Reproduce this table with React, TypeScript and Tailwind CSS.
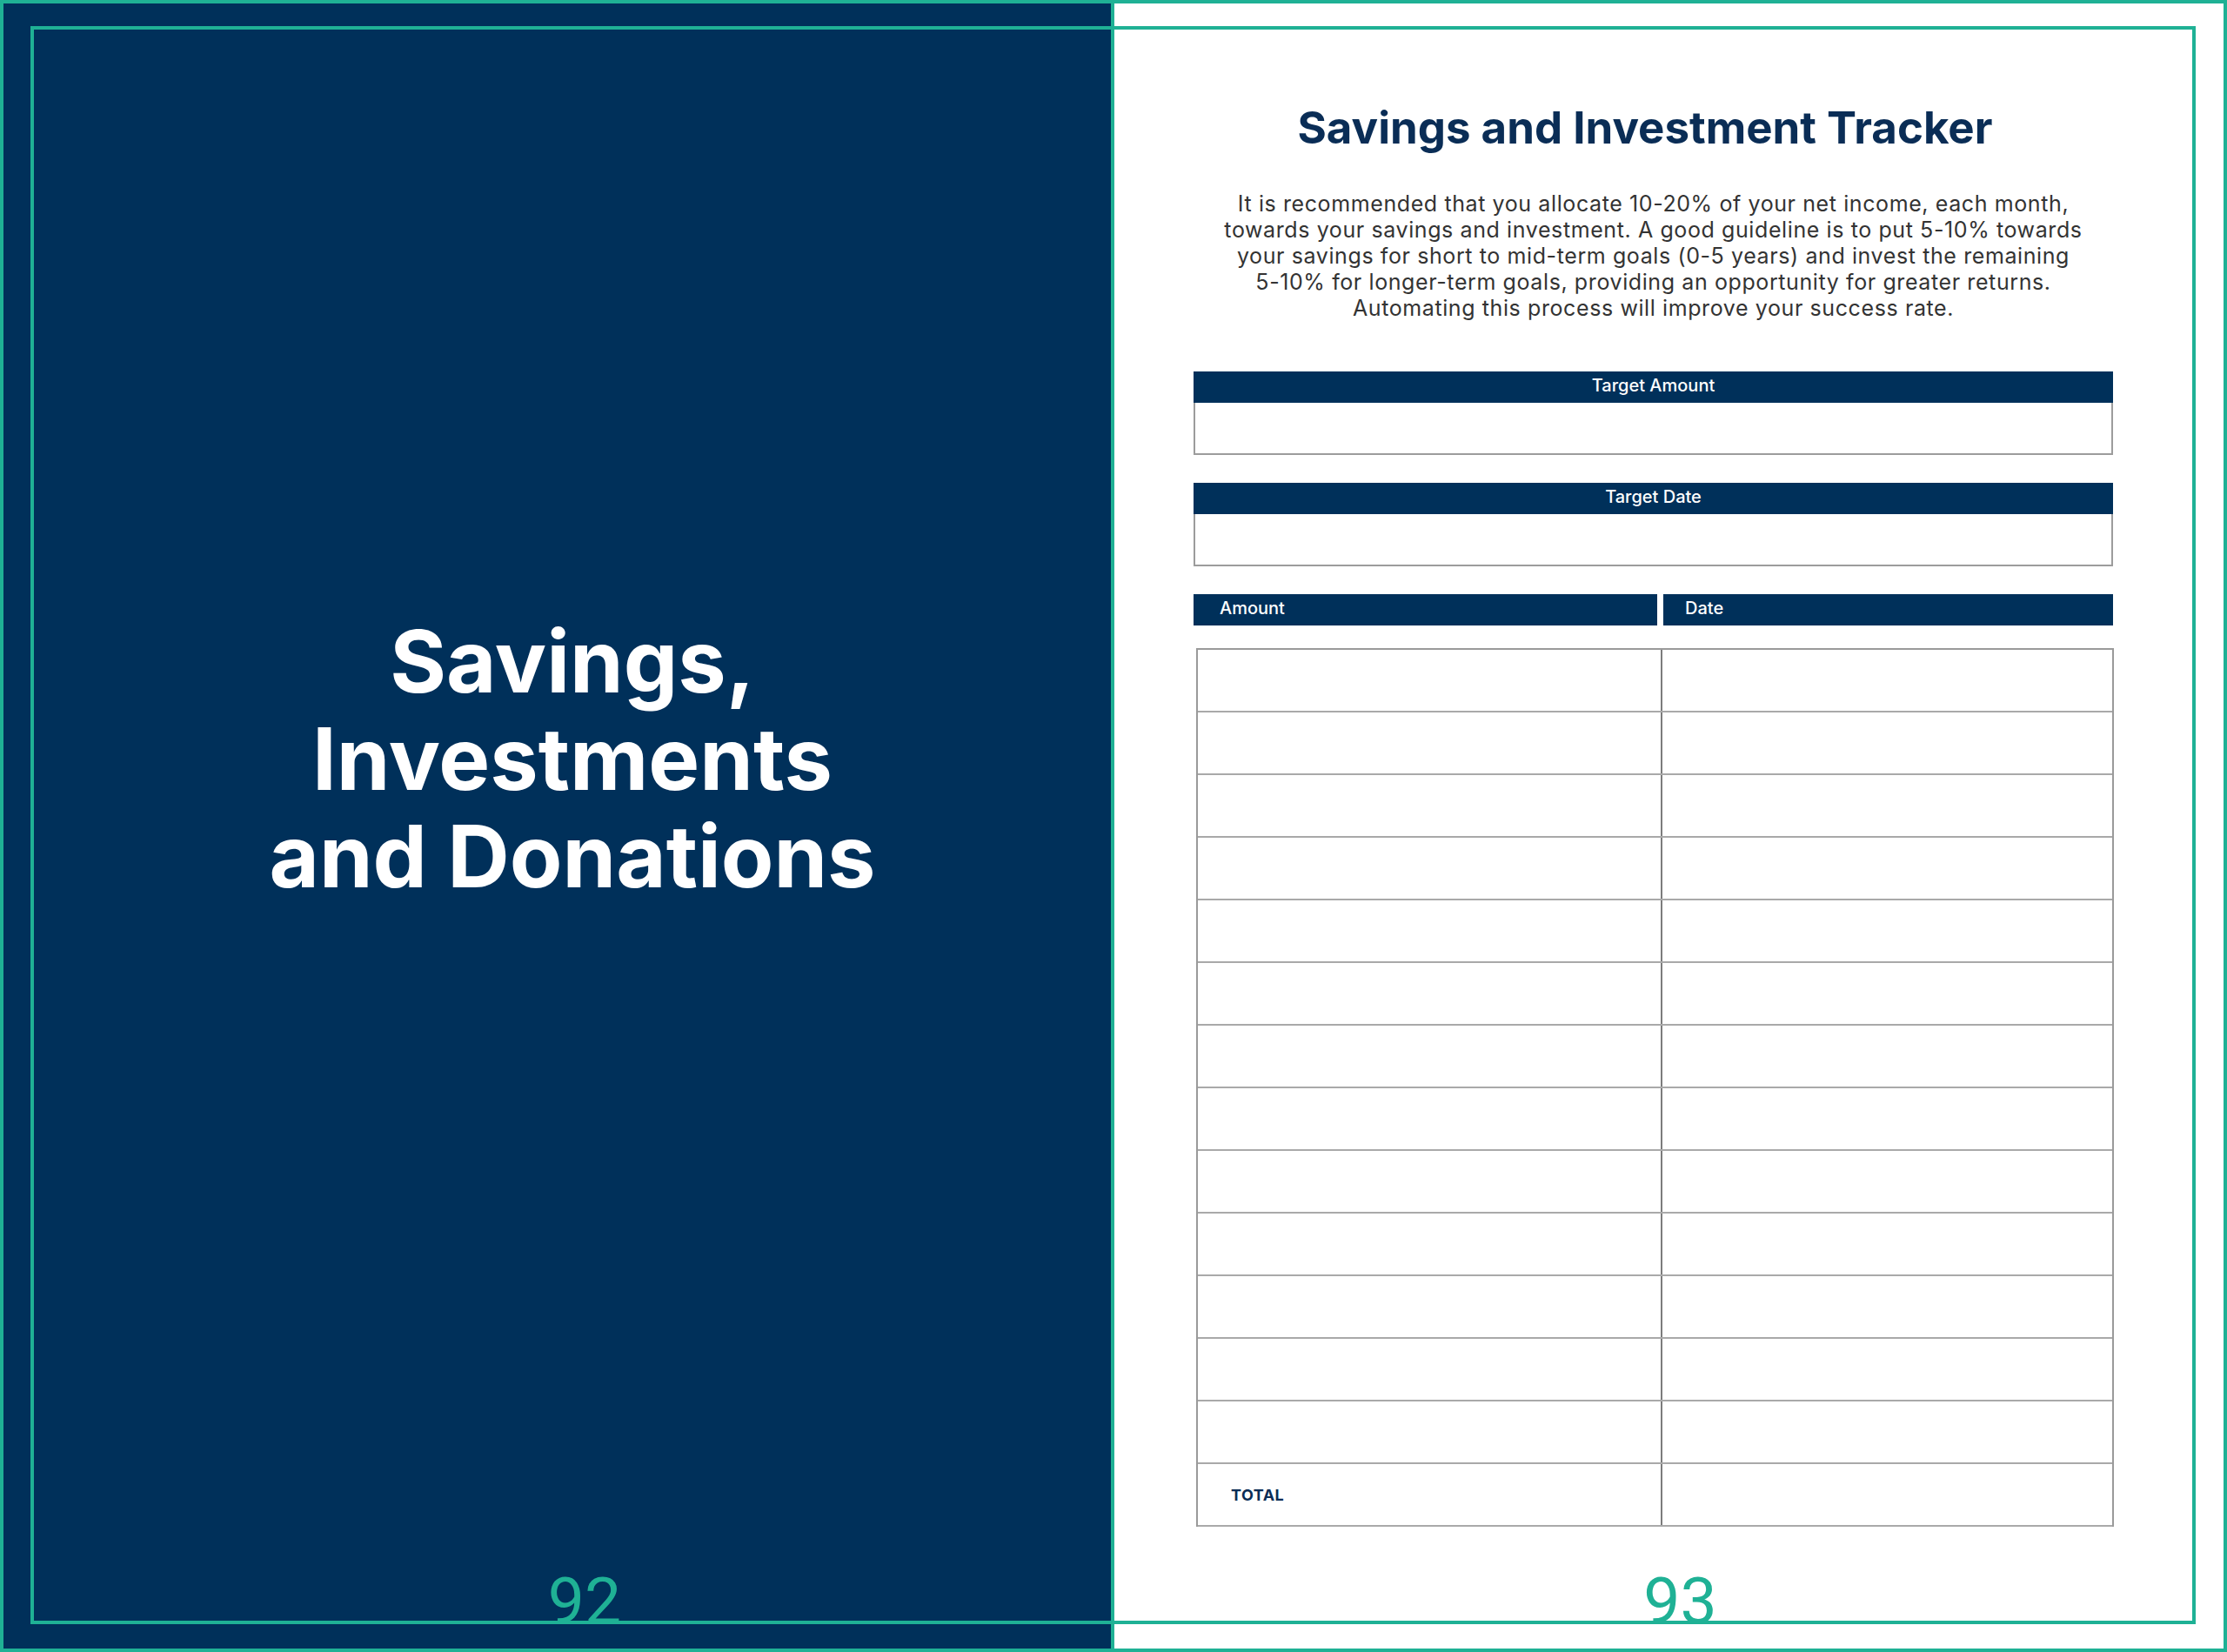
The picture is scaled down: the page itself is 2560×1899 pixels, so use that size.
import React from 'react';

const ROW_COUNT = 13;

// Dark header strip used above the input boxes and the table columns
function HeaderBar({ label, align = 'center', className = '' }: { label: string; align?: 'center' | 'left'; className?: string }) {
  return (
    <div
      className={`h-[36px] bg-[#00305a] flex items-center pb-[5px] text-white text-[20px] font-medium ${
        align === 'center' ? 'justify-center' : 'justify-start'
      } ${className}`}
    >
      {label}
    </div>
  );
}

function InputBox({ label }: { label: string }) {
  return (
    <div className="w-full flex flex-col">
      <HeaderBar label={label} />
      <div className="h-[60px] border-x-2 border-b-2 border-[#9c9c9c] bg-white" />
    </div>
  );
}

export default function App() {
  return (
    <div className="relative w-[2560px] h-[1899px] border-[4px] border-[#1fb195] flex overflow-hidden font-['Inter',sans-serif]">
      {/* Page 92 */}
      <section className="w-[1273px] h-full bg-[#00305a] flex flex-col pl-[35px]">
        <h1 className="pt-[700px] text-center text-white font-bold text-[99px] leading-[112px]">
          Savings,
          <br />
          Investments
          <br />
          and Donations
        </h1>
        <div className="mt-auto pb-[17px] pl-[28px] text-center font-['Roboto',sans-serif] text-[75px] leading-[75px] text-[#1fb195]">
          92
        </div>
      </section>

      <div className="w-[4px] h-full bg-[#1fb195]" />

      {/* Page 93 */}
      <section className="flex-1 h-full bg-white flex flex-col items-center pr-[36px]">
        <h2 className="pt-[113px] mr-[19px] text-[51px] leading-[60px] font-bold text-[#0a2d56]">
          Savings and Investment Tracker
        </h2>
        <p className="mt-[42px] text-center text-[25px] leading-[30px] tracking-[0.6px] text-[#333333]">
          It is recommended that you allocate 10-20% of your net income, each month,
          <br />
          towards your savings and investment. A good guideline is to put 5-10% towards
          <br />
          your savings for short to mid-term goals (0-5 years) and invest the remaining
          <br />
          5-10% for longer-term goals, providing an opportunity for greater returns.
          <br />
          Automating this process will improve your success rate.
        </p>

        <div className="mt-[58px] w-[1057px] flex flex-col">
          <InputBox label="Target Amount" />
          <div className="h-[32px]" />
          <InputBox label="Target Date" />

          <div className="mt-[32px] flex gap-[7px]">
            <HeaderBar label="Amount" align="left" className="w-[533px] pl-[30px]" />
            <HeaderBar label="Date" align="left" className="flex-1 pl-[25px]" />
          </div>

          <div className="mt-[26px] ml-[3px] w-[1055px] border-t-2 border-x-2 border-[#9a9a9a]">
            {Array.from({ length: ROW_COUNT }).map((_, i) => (
              <div key={i} className="h-[72px] flex border-b-2 border-[#a9a9a9]">
                <div className="w-[534px] border-r-2 border-[#7c7c7c]" />
                <div className="flex-1" />
              </div>
            ))}
            <div className="h-[72px] flex border-b-2 border-[#a9a9a9]">
              <div className="w-[534px] border-r-2 border-[#7c7c7c] flex items-center pl-[38px] text-[18px] font-bold tracking-[0.5px] text-[#0a2d56]">
                TOTAL
              </div>
              <div className="flex-1" />
            </div>
          </div>
        </div>

        <div className="mt-auto pb-[17px] pl-[62px] font-['Roboto',sans-serif] text-[75px] leading-[75px] text-[#1fb195]">
          93
        </div>
      </section>

      {/* inner frame line running across both pages */}
      <div className="absolute left-[31px] top-[26px] w-[2489px] h-[1837px] border-[4px] border-[#1fb195] pointer-events-none" />
    </div>
  );
}
